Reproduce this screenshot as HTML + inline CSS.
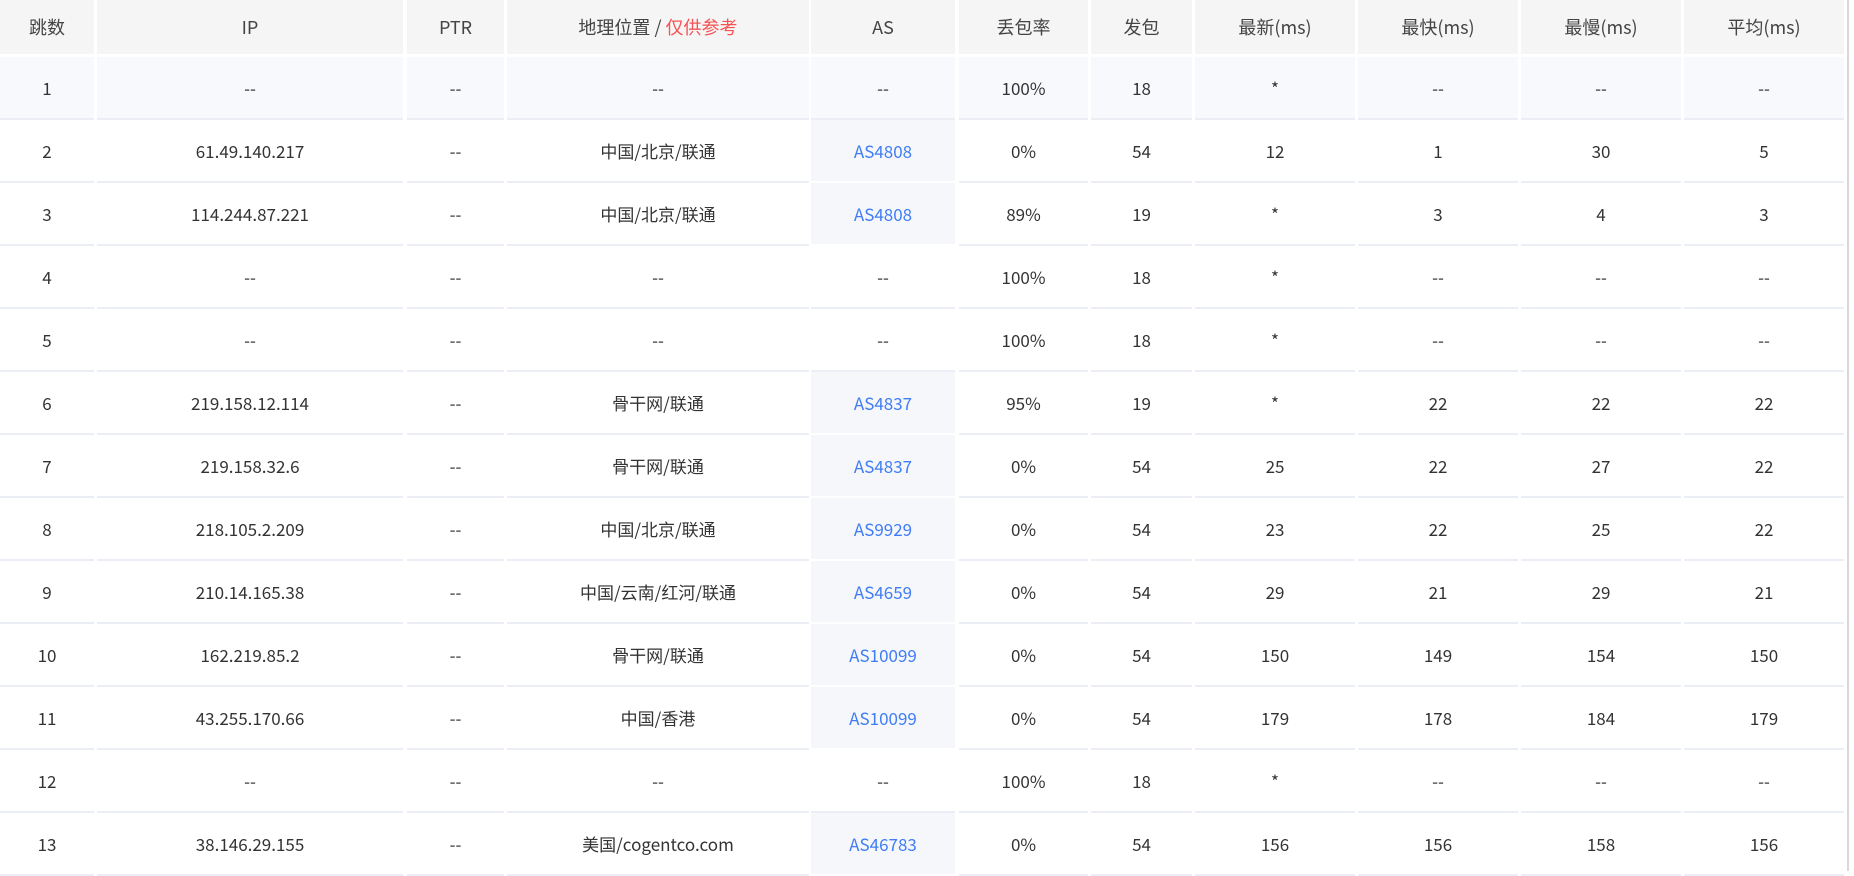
<!DOCTYPE html><html><head><meta charset="utf-8"><style>
body{margin:0;width:1854px;height:871px;overflow:hidden;background:#fff;font-family:"Noto Sans CJK SC","Liberation Sans",sans-serif;font-size:17px;color:#333}
.r{position:absolute;left:0;width:1844px}
.c{position:absolute;top:0;height:100%;display:flex;align-items:center;justify-content:center;line-height:1}
.h .c{background:#f5f5f5;color:#444;font-size:18px}
.d .c{border-bottom:2px solid #ebeef5;box-sizing:border-box}
.d.f .c{background:#f8f9fc}
.d .as{background:#f5f7fa;color:#3f7cf6;border-bottom:2px solid #fff}
.red{color:#f55353}
.sb{position:absolute;left:1847px;top:0;width:2px;height:871px;background:#d8d8d8}
</style></head><body>
<div id="t"></div>
<div class="sb"></div>
<script>
var X=[[0,94],[97,306],[407,97],[507,302],[811,144],[959,129],[1091,101],[1195,160],[1358,160],[1521,160],[1684,160]];
var H=['跳数','IP','PTR','地理位置 / <span class="red">&nbsp;仅供参考</span>','AS','丢包率','发包','最新(ms)','最快(ms)','最慢(ms)','平均(ms)'];
var D=[
['1','--','--','--','--','100%','18','*','--','--','--'],
['2','61.49.140.217','--','中国/北京/联通','AS4808','0%','54','12','1','30','5'],
['3','114.244.87.221','--','中国/北京/联通','AS4808','89%','19','*','3','4','3'],
['4','--','--','--','--','100%','18','*','--','--','--'],
['5','--','--','--','--','100%','18','*','--','--','--'],
['6','219.158.12.114','--','骨干网/联通','AS4837','95%','19','*','22','22','22'],
['7','219.158.32.6','--','骨干网/联通','AS4837','0%','54','25','22','27','22'],
['8','218.105.2.209','--','中国/北京/联通','AS9929','0%','54','23','22','25','22'],
['9','210.14.165.38','--','中国/云南/红河/联通','AS4659','0%','54','29','21','29','21'],
['10','162.219.85.2','--','骨干网/联通','AS10099','0%','54','150','149','154','150'],
['11','43.255.170.66','--','中国/香港','AS10099','0%','54','179','178','184','179'],
['12','--','--','--','--','100%','18','*','--','--','--'],
['13','38.146.29.155','--','美国/cogentco.com','AS46783','0%','54','156','156','158','156']];
var s='<div class="r h" style="top:0;height:54px">';
H.forEach(function(h,i){s+='<div class="c" style="left:'+X[i][0]+'px;width:'+X[i][1]+'px">'+h+'</div>'});
s+='</div>';
D.forEach(function(r,j){s+='<div class="r d'+(j==0?' f':'')+'" style="top:'+(57+63*j)+'px;height:63px">';
r.forEach(function(v,i){var a=(i==4&&v!='--')?' as':'';s+='<div class="c'+a+'" style="left:'+X[i][0]+'px;width:'+X[i][1]+'px">'+v+'</div>'});s+='</div>'});
document.getElementById('t').innerHTML=s;
</script></body></html>
